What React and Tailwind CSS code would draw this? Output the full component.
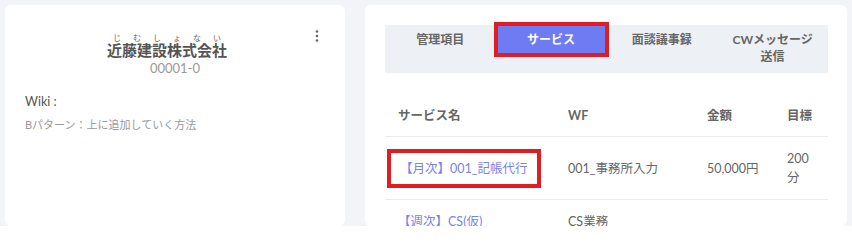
import React from "react";

const font = { fontFamily: '"Lato", "Noto Sans CJK JP", sans-serif' };

const tabs = [["管理項目"], ["サービス"], ["面談議事録"], ["CWメッセージ", "送信"]];

const services = [
  { name: "【月次】001_記帳代行", wf: "001_事務所入力", price: "50,000円", goal: "200分", marked: true },
  { name: "【週次】CS(仮)", wf: "CS業務", price: "", goal: "" },
];

function Dots() {
  return (
    <svg width="6" height="14" viewBox="0 0 6 14" className="text-[#666]">
      <circle cx="3" cy="2.5" r="1.3" fill="currentColor" />
      <circle cx="3" cy="7" r="1.3" fill="currentColor" />
      <circle cx="3" cy="11.5" r="1.3" fill="currentColor" />
    </svg>
  );
}

function ClientCard() {
  return (
    <div className="w-[340px] shrink-0 bg-white rounded-[6px] px-5 pt-[21px]">
      <div className="flex items-start">
        <div className="flex-1 flex justify-center pt-[7px]">
          <ruby className="text-[15px] font-bold text-[#555] leading-[20px] [ruby-align:space-around]">
            近藤建設株式会社
            <rt className="text-[8px] font-normal leading-[10px] text-[#666]">じむしょない</rt>
          </ruby>
        </div>
        <div className="w-4 flex justify-center pt-[3px]">
          <Dots />
        </div>
      </div>
      <div className="text-center text-[13px] text-[#9a9a9a] leading-[16px]">00001-0</div>
      <div className="mt-[18px] text-[12.5px] text-[#555] leading-[16px]">Wiki :</div>
      <div className="mt-[7px] text-[11px] text-[#9a9a9a] leading-[16px]">Bパターン：上に追加していく方法</div>
    </div>
  );
}

function ServiceCard() {
  return (
    <div className="flex-1 bg-white rounded-[6px] pt-5 pl-5 pr-[19px] overflow-hidden">
      <div className="grid grid-cols-4 bg-[#edf0f4] h-[48px]">
        {tabs.map((lines, i) =>
          i === 1 ? (
            <div key={i} className="px-[2px] pt-[1px]">
              <div className="h-[27px] bg-[#6f7bf2] outline-4 outline-[#e31b23] flex items-center justify-center text-white text-[12px] font-bold">
                {lines[0]}
              </div>
            </div>
          ) : (
            <div key={i} className="pt-[6px] px-[2px] text-center text-[12px] font-bold text-[#666] leading-[17px]">
              {lines.map((l) => (
                <div key={l}>{l}</div>
              ))}
            </div>
          )
        )}
      </div>
      <table className="mt-[22px] w-full text-[12.5px] table-fixed">
        <colgroup>
          <col className="w-[170px]" />
          <col className="w-[139px]" />
          <col className="w-[80px]" />
          <col />
        </colgroup>
        <thead>
          <tr className="border-b border-[#e8ebf0]">
            {["サービス名", "WF", "金額", "目標"].map((h) => (
              <th key={h} className="text-left font-bold text-[#666] px-[13px] py-[11px] leading-[19px]">
                {h}
              </th>
            ))}
          </tr>
        </thead>
        <tbody>
          {services.map((s) => (
            <tr key={s.name} className="border-b border-[#e8ebf0]">
              <td className="px-[13px] py-3 leading-[19px] align-middle whitespace-nowrap">
                <span
                  className={`text-[#7a82ec] ${s.marked ? "inline-block outline-4 outline-[#e31b23] -ml-[7px] px-[9px] py-[6px]" : ""}`}
                >
                  {s.name}
                </span>
              </td>
              <td className="px-[13px] py-3 leading-[19px] text-[#666]">{s.wf}</td>
              <td className="px-[13px] py-3 leading-[19px] text-[#666]">{s.price}</td>
              <td className="px-[13px] py-3 leading-[19px] text-[#666]">{s.goal}</td>
            </tr>
          ))}
        </tbody>
      </table>
    </div>
  );
}

export default function App() {
  return (
    <div style={font} className="bg-white w-[852px] h-[245px]">
      <div className="h-[226px] bg-[#f3f4f8] flex gap-5 pt-[5px] px-[5px] overflow-hidden">
        <ClientCard />
        <ServiceCard />
      </div>
    </div>
  );
}
